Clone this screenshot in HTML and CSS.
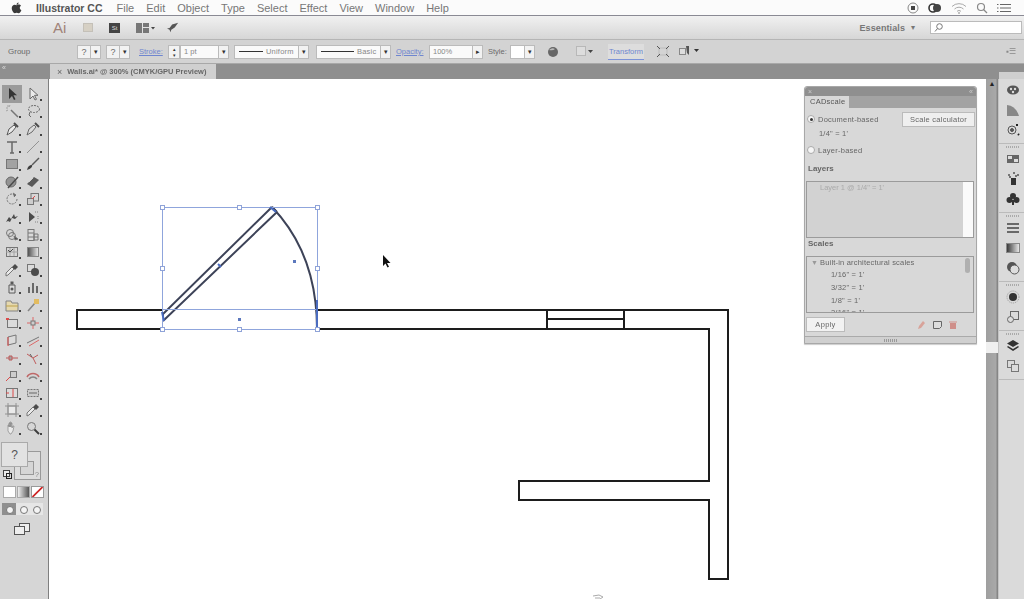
FILE: index.html
```html
<!DOCTYPE html>
<html lang="en">
<head>
<meta charset="utf-8">
<title>Illustrator CC</title>
<link rel="stylesheet" href="styles.css">
</head>
<body>
<header class="menubar">
  <svg class="apple" width="12" height="13" viewBox="0 0 12 13"><path d="M8.300 0.500c.1 1.200-1 2.500-2.300 2.400-.1-1.200 1.100-2.400 2.300-2.400zM6 3.400c.6 0 1.400-.6 2.500-.6 1 0 1.900.5 2.400 1.300-2 1.200-1.700 3.900.4 4.800-.5 1.400-1.700 3.400-3 3.400-.8 0-1.200-.5-2.100-.5s-1.400.5-2.100.5C2.800 12.300.8 9.400.8 6.900c0-2.500 1.600-3.900 3.200-3.900.9 0 1.500.4 2 .4z" fill="#3a3a3a"/></svg>
  <span class="menu-app">Illustrator CC</span>
  <nav class="menu-items"><span>File</span><span>Edit</span><span>Object</span><span>Type</span><span>Select</span><span>Effect</span><span>View</span><span>Window</span><span>Help</span></nav>
  <div class="status">
    <svg width="12" height="12" viewBox="0 0 12 12"><circle cx="6" cy="6" r="5" fill="none" stroke="#888"/><rect x="4" y="4" width="4" height="4" fill="#444"/></svg>
    <svg width="14" height="12" viewBox="0 0 14 12"><circle cx="5" cy="6" r="4" fill="none" stroke="#333" stroke-width="1.600"/><circle cx="9" cy="6" r="4" fill="#444"/></svg>
    <svg width="16" height="12" viewBox="0 0 16 12" fill="none" stroke="#aaa"><path d="M1 4.500a10 10 0 0 1 14 0M3.500 7a6.500 6.500 0 0 1 9 0M6 9.300a3 3 0 0 1 4 0"/><circle cx="8" cy="11" r=".8" fill="#777" stroke="none"/></svg>
    <svg width="12" height="12" viewBox="0 0 12 12" fill="none" stroke="#888" stroke-width="1.200"><circle cx="5" cy="5" r="3.500"/><path d="M7.500 7.500L11 11"/></svg>
    <svg width="14" height="10" viewBox="0 0 14 10" stroke="#666"><path d="M3 1.500h11M3 5h11M3 8.500h11M0 1.500h1.500M0 5h1.500M0 8.500h1.500"/></svg>
  </div>
</header>

<section class="appbar">
  <span class="ai-logo">Ai</span>
  <span class="app-bridge"></span>
  <span class="app-stock">St</span>
  <svg class="app-arrange" width="20" height="10" viewBox="0 0 20 10"><path d="M0 0h6v10H0zM7 0h6v4H7zM7 5h6v5H7z" fill="#777"/><path d="M15 4h4l-2 2.500z" fill="#444"/></svg>
  <svg class="app-rocket" width="12" height="12" viewBox="0 0 14 12"><path d="M13 0L6 2 3 6 0 6.500 3 8l1 3 1-3 4-2.500z" fill="#555"/></svg>
  <div class="app-right">
    <span class="essentials">Essentials</span>
    <span class="small-arrow">▾</span>
    <div class="search-box"><svg width="9" height="9" viewBox="0 0 9 9" fill="none" stroke="#777"><circle cx="5.500" cy="3.500" r="2.800"/><path d="M3.500 5.500L1 8.500"/></svg></div>
  </div>
</section>

<section class="controlbar">
  <span class="ctl-label ctl-group">Group</span>
  <span class="q-box">?</span><span class="drop-btn">▾</span>
  <span class="q-box q-second">?</span><span class="drop-btn">▾</span>
  <span class="link ctl-stroke">Stroke:</span>
  <span class="stepper"><i>▴</i><i>▾</i></span>
  <span class="field field-pt">1 pt</span><span class="drop-btn">▾</span>
  <span class="field field-line"><b></b><em>Uniform</em></span><span class="drop-btn">▾</span>
  <span class="field field-line field-basic"><b></b><em>Basic</em></span><span class="drop-btn">▾</span>
  <span class="link ctl-opacity">Opacity:</span>
  <span class="field field-op">100%</span><span class="drop-btn">▸</span>
  <span class="ctl-label ctl-style">Style:</span>
  <span class="field field-style"></span><span class="drop-btn">▾</span>
  <svg class="ctl-globe" width="12" height="12" viewBox="0 0 12 12"><circle cx="6" cy="6" r="5" fill="#666"/><path d="M2 4q3-3 6-1q-2 2-6 1z" fill="#bbb"/></svg>
  <svg class="ctl-grid" width="17" height="11" viewBox="0 0 17 11"><rect x=".5" y=".5" width="9" height="9" fill="#ddd" stroke="#999" stroke-dasharray="1 1"/><path d="M12 4h5l-2.500 3z" fill="#444"/></svg>
  <span class="link ctl-transform">Transform</span>
  <svg class="ctl-xform" width="12" height="11" viewBox="0 0 12 11" fill="none" stroke="#555"><path d="M2 2h8v7H2z" stroke="#bbb"/><path d="M0 0l3 3M12 0L9 3M0 11l3-3M12 11L9 8"/></svg>
  <svg class="ctl-align" width="22" height="11" viewBox="0 0 22 11"><rect x=".5" y="2.500" width="6" height="6" fill="#ddd" stroke="#888"/><path d="M7 0h3v9L8 7z" fill="#555"/><path d="M15 3h5l-2.500 3z" fill="#333"/></svg>
  <span class="ctl-menu">▪☰</span>
</section>

<section class="tabstrip">
  <div class="toolhead"><span class="chev">«</span></div>
  <div class="doctab"><span class="tab-x">×</span><span>Walls.ai* @ 300% (CMYK/GPU Preview)</span></div>
  <div class="dockhead"></div>
</section>

<main class="workspace">
  <aside class="tools">
    <div class="tool-grid">
      <span class="tool on"><svg viewBox="0 0 14 14"><path d="M4 1v11l3-3 2 4 1.500-.7-2-4h3.500z" fill="#222"/></svg></span>
      <span class="tool"><svg viewBox="0 0 14 14"><path d="M4 1v11l3-3 2 4 1.500-.7-2-4h3.500z" fill="#eee" stroke="#555"/></svg></span>
      <span class="tool"><svg viewBox="0 0 14 14" fill="none" stroke="#666"><path d="M13 13L6 6" stroke-width="1.500"/><path d="M3 1v2M1 4h2M5 1L4 3M1 7l2-1" stroke="#999"/></svg></span>
      <span class="tool"><svg viewBox="0 0 14 14" fill="none" stroke="#555"><ellipse cx="8" cy="5" rx="5.500" ry="3.500" stroke-dasharray="2 1"/><path d="M4 8l-1 3 2 2"/></svg></span>
      <span class="tool tool-gap"><svg viewBox="0 0 14 14"><path d="M2 13l2-6 5-4 2 2-4 5z" fill="#eee" stroke="#444"/><path d="M9 1l4 4" stroke="#333" stroke-width="2"/></svg></span>
      <span class="tool tool-gap"><svg viewBox="0 0 14 14"><path d="M1 13l2-6 5-4 2 2-4 5z" fill="#ddd" stroke="#555"/><path d="M9 1l4 4" stroke="#333" stroke-width="2"/></svg></span>
      <span class="tool"><svg viewBox="0 0 14 14" fill="none" stroke="#555" stroke-width="1.500"><path d="M2 2h10M7 2v11M5 13h4"/></svg></span>
      <span class="tool"><svg viewBox="0 0 14 14" stroke="#888"><path d="M1 13L13 1"/></svg></span>
      <span class="tool"><svg viewBox="0 0 14 14"><rect x="1.500" y="2.500" width="11" height="9" fill="#999" stroke="#666"/></svg></span>
      <span class="tool"><svg viewBox="0 0 14 14"><path d="M13 1L6 8" stroke="#444" stroke-width="1.500"/><path d="M1 13q1-5 5-5q1 3-5 5z" fill="#222"/></svg></span>
      <span class="tool"><svg viewBox="0 0 14 14"><circle cx="6" cy="7" r="5" fill="#888" stroke="#555"/><path d="M3 13L13 2" stroke="#333" stroke-width="1.500"/></svg></span>
      <span class="tool"><svg viewBox="0 0 14 14"><path d="M1 9l7-7 5 3-7 7z" fill="#444"/><path d="M3 7l4-4" stroke="#ccc"/></svg></span>
      <span class="tool tool-gap"><svg viewBox="0 0 14 14" fill="none" stroke="#666"><path d="M12 7a5 5 0 1 1-2-4" stroke-dasharray="2 1"/><path d="M8 1l3 2-2 2" fill="#555"/></svg></span>
      <span class="tool tool-gap"><svg viewBox="0 0 14 14" fill="none" stroke="#666"><rect x="5" y="1.500" width="7.500" height="7.500"/><rect x="1.500" y="6.500" width="6" height="6" fill="#ccc"/><path d="M6 7l3-3" stroke="#d33"/></svg></span>
      <span class="tool"><svg viewBox="0 0 14 14"><path d="M1 12l3-5 2 2 3-5 1 3 3-1-3 3-3-1-2 4-2-1z" fill="#333"/></svg></span>
      <span class="tool"><svg viewBox="0 0 14 14"><path d="M3 2l6 5-6 5z" fill="#333"/><path d="M9 2h4M12 6v3M9 12h4" stroke="#777" stroke-dasharray="1 1"/></svg></span>
      <span class="tool"><svg viewBox="0 0 14 14" fill="none" stroke="#666"><circle cx="5" cy="5" r="3.500"/><circle cx="7" cy="8" r="3.500"/><path d="M9 8l4 3-3 1z" fill="#333"/></svg></span>
      <span class="tool"><svg viewBox="0 0 14 14" fill="none" stroke="#666"><rect x="2" y="1.500" width="6" height="11" fill="#ddd"/><path d="M8 6h4v6H8zM2 5h6M2 9h10"/></svg></span>
      <span class="tool tool-gap"><svg viewBox="0 0 14 14" fill="none" stroke="#666"><rect x="1.500" y="2.500" width="11" height="9"/><path d="M1 7h12M5 3v8M9 3v8" stroke="#999"/><path d="M3 5l2 2 3-3" stroke="#333"/></svg></span>
      <span class="tool tool-gap"><svg viewBox="0 0 14 14"><defs><linearGradient id="gr"><stop offset="0" stop-color="#333"/><stop offset="1" stop-color="#eee"/></linearGradient></defs><rect x="1.500" y="2.500" width="11" height="9" fill="url(#gr)" stroke="#777"/></svg></span>
      <span class="tool"><svg viewBox="0 0 14 14"><path d="M1 13l2-1 6-6-2-2-6 6z" fill="#eee" stroke="#666"/><path d="M7 4l3-3 3 3-3 3z" fill="#333"/></svg></span>
      <span class="tool"><svg viewBox="0 0 14 14"><rect x="1.500" y="1.500" width="7" height="7" fill="#ddd" stroke="#666"/><circle cx="9" cy="9" r="4" fill="#333"/></svg></span>
      <span class="tool"><svg viewBox="0 0 14 14"><path d="M4 5h6v8H4z" fill="#ddd" stroke="#444"/><rect x="5.500" y="1.500" width="3" height="3" fill="#444"/><circle cx="7" cy="9" r="1.500" fill="#444"/></svg></span>
      <span class="tool"><svg viewBox="0 0 14 14" fill="#555"><path d="M2 7h2v6H2zM6 3h2v10H6zM10 6h2v7h-2z"/></svg></span>
      <span class="tool tool-gap"><svg viewBox="0 0 14 14"><path d="M1 3h5l1 2h6v8H1z" fill="#e8d9a8" stroke="#777"/><path d="M1 8h12" stroke="#b93"/></svg></span>
      <span class="tool tool-gap"><svg viewBox="0 0 14 14"><path d="M2 13l7-8" stroke="#777" stroke-width="1.500"/><rect x="8" y="1" width="5" height="5" fill="#e6b84c"/></svg></span>
      <span class="tool tool-gap"><svg viewBox="0 0 14 14"><rect x="2.500" y="3.500" width="10" height="8" fill="#ddd" stroke="#666"/><path d="M1 3h3" stroke="#d33" stroke-width="2"/></svg></span>
      <span class="tool tool-gap"><svg viewBox="0 0 14 14" stroke="#d55" fill="none"><path d="M7 1v12M1 7h12"/><rect x="5" y="5" width="4" height="4" fill="#ccc" stroke="#666"/></svg></span>
      <span class="tool"><svg viewBox="0 0 14 14"><path d="M3 4l8-2v8l-8 2z" fill="#ddd" stroke="#666"/><path d="M3 4v9" stroke="#d33"/></svg></span>
      <span class="tool"><svg viewBox="0 0 14 14" fill="none" stroke="#666"><path d="M1 10l12-6"/><path d="M3 13l10-6" stroke="#d55"/></svg></span>
      <span class="tool"><svg viewBox="0 0 14 14" fill="none" stroke="#b44"><path d="M1 7h12"/><path d="M4 5h3v4H4z" fill="#999"/></svg></span>
      <span class="tool"><svg viewBox="0 0 14 14" fill="none" stroke="#b44"><path d="M1 3l6 4 3 6M7 7l5-3"/><path d="M4 3l2 3" stroke="#444"/></svg></span>
      <span class="tool"><svg viewBox="0 0 14 14" fill="none" stroke="#666"><rect x="5.500" y="3.500" width="6" height="6" fill="#ccc"/><path d="M1 13l4-4" stroke="#d33"/></svg></span>
      <span class="tool"><svg viewBox="0 0 14 14" fill="none" stroke="#777" stroke-width="1.500"><path d="M1 9a7 7 0 0 1 12 0" stroke="#b55"/><path d="M3 11a5 5 0 0 1 8 0"/></svg></span>
      <span class="tool"><svg viewBox="0 0 14 14" fill="none" stroke="#666"><rect x="1.500" y="2.500" width="11" height="9" fill="#ddd"/><path d="M8 3v8M1 7h3" stroke="#d33"/></svg></span>
      <span class="tool"><svg viewBox="0 0 14 14" fill="none" stroke="#666"><rect x="1.500" y="3.500" width="11" height="7" fill="#ccc" stroke-dasharray="2 1"/><path d="M3 7h8" stroke="#555"/></svg></span>
      <span class="tool tool-gap"><svg viewBox="0 0 14 14" fill="none" stroke="#888"><rect x="3" y="3" width="8" height="8" fill="#eee"/><path d="M3 0v14M11 0v14M0 3h14M0 11h14"/></svg></span>
      <span class="tool tool-gap"><svg viewBox="0 0 14 14"><path d="M1 13l2-1 6-6-2-2-6 6z" fill="#eee" stroke="#666"/><path d="M7 4l3-3 3 3-3 3z" fill="#333"/></svg></span>
      <span class="tool"><svg viewBox="0 0 14 14"><path d="M3 7V4h1v2V2h1v4V1h1v5V2h1v5l1-2h1l-1 5-2 3H5L3 10z" fill="#eee" stroke="#666" stroke-width=".6"/></svg></span>
      <span class="tool"><svg viewBox="0 0 14 14" fill="none" stroke="#666"><circle cx="5.500" cy="5.500" r="4"/><path d="M8.500 8.500L13 13" stroke="#222" stroke-width="2"/></svg></span>
    </div>
    <div class="swatches">
      <span class="fill-front">?</span>
      <span class="fill-back"><i></i><u>?</u></span>
      <span class="mini-swap"></span>
      <span class="mini-default"></span>
    </div>
    <div class="color-modes"><span class="cm cm-solid"></span><span class="cm cm-grad"></span><span class="cm cm-none"><svg viewBox="0 0 12 12"><path d="M0 12L12 0" stroke="#c22" stroke-width="2"/></svg></span></div>
    <div class="draw-modes"><span class="dm on"></span><span class="dm"></span><span class="dm"></span></div>
    <div class="screen-mode"><svg width="16" height="13" viewBox="0 0 16 13" fill="#eee" stroke="#555"><rect x="5.500" y=".5" width="10" height="8"/><rect x=".5" y="3.500" width="10" height="8"/></svg></div>
  </aside>

  <div class="canvas">
    <svg class="drawing" width="1024" height="520" viewBox="0 79 1024 520">
      <g fill="none" stroke="#1d1d1d" stroke-width="2">
        <path d="M162 310H77v19h85"/>
        <path d="M317 310H728V579H709V500H519V481H709V329H317"/>
        <path d="M547 310v19M624 310v19M547 319h77"/>
      </g>
      <g fill="none" stroke="#3d4358" stroke-width="2">
        <path d="M163 314L272 207M163 321L277 212M163 314v7M272 207l5 5"/>
        <path d="M272 207Q317 254 317 329"/>
      </g>
      <g fill="none" stroke="#8fa5dc">
        <path d="M162.500 207.500H317.500V329.500H162.500zM162.500 309.500H317.500"/>
        <path d="M162 312l2 9M218 264l3 3M270 207l6 5M317 300v28" stroke="#4a6cc0" stroke-width="2"/>
      </g>
      <g fill="#fff" stroke="#8fa3d8">
        <rect x="160.500" y="205.500" width="4" height="4"/><rect x="237.500" y="205.500" width="4" height="4"/><rect x="315.500" y="205.500" width="4" height="4"/>
        <rect x="160.500" y="266.500" width="4" height="4"/><rect x="315.500" y="266.500" width="4" height="4"/>
        <rect x="160.500" y="327.500" width="4" height="4"/><rect x="237.500" y="327.500" width="4" height="4"/><rect x="315.500" y="327.500" width="4" height="4"/>
      </g>
      <g fill="#5c78bd"><rect x="293" y="260" width="3" height="3"/><rect x="238" y="318" width="3" height="3"/></g>
      <path d="M383 255v11l2.500-2.500 2 4 1.500-.7-2-3.800h3.500z" fill="#111"/>
      <path d="M593 596l6-1 4 2-3 2M595 598h5" fill="none" stroke="#aaa"/>
    </svg>

    <section class="panel">
      <div class="panel-top"><span>×</span><span>«</span></div>
      <div class="panel-tabs"><span class="panel-tab">CADscale</span></div>
      <div class="panel-body">
        <div class="mode-row">
          <span class="radio checked"></span><span class="mode-label">Document-based</span>
          <span class="calc-btn">Scale calculator</span>
        </div>
        <div class="scale-line">1/4" = 1'</div>
        <div class="mode-row layer-mode"><span class="radio"></span><span class="mode-label">Layer-based</span></div>
        <h3 class="section-head">Layers</h3>
        <div class="list layers-list"><span class="layer-item">Layer 1 @ 1/4" = 1'</span><span class="layer-track"></span></div>
        <h3 class="section-head scales-head">Scales</h3>
        <div class="list scales-list">
          <div class="scale-group"><i>▼</i>Built-in architectural scales</div>
          <div class="scale-item">1/16" = 1'</div>
          <div class="scale-item">3/32" = 1'</div>
          <div class="scale-item">1/8" = 1'</div>
          <div class="scale-item">3/16" = 1'</div>
          <span class="scale-thumb"></span>
        </div>
        <div class="panel-actions">
          <span class="apply-btn">Apply</span>
          <div class="action-icons">
            <svg width="9" height="10" viewBox="0 0 9 10"><path d="M1 9l1-3 4-5 2 2-4 5z" fill="#d8a39a"/></svg>
            <svg width="9" height="9" viewBox="0 0 9 9"><path d="M.5 1.500h8v5l-2 2h-6z" fill="#ddd" stroke="#666"/></svg>
            <svg width="8" height="9" viewBox="0 0 8 9"><path d="M0 1.500h8v1H0zM1 3h6v6H1z" fill="#cf8f8a"/></svg>
          </div>
        </div>
      </div>
      <div class="panel-foot"><span class="foot-grip"></span></div>
    </section>
  </div>

  <div class="vscroll">
    <span class="up-arrow">▲</span>
    <span class="v-thumb"></span>
  </div>

  <aside class="dock">
    <div class="dock-group first">
      <svg viewBox="0 0 14 14"><ellipse cx="7" cy="7" rx="6" ry="4.500" fill="#555"/><circle cx="5" cy="6" r="1.200" fill="#ddd"/><circle cx="9" cy="6" r="1.200" fill="#ddd"/><circle cx="7" cy="9" r="1.200" fill="#ddd"/></svg>
      <svg viewBox="0 0 14 14"><path d="M1 13V2q9 1 12 11z" fill="#888"/></svg>
      <svg viewBox="0 0 14 14" fill="none" stroke="#555"><circle cx="6" cy="7" r="4"/><circle cx="6" cy="7" r="1.500" fill="#555"/><path d="M10 2l2 0M12 11l1 1" stroke="#222" stroke-width="2"/></svg>
    </div>
    <div class="dock-group">
      <svg viewBox="0 0 14 14"><rect x="1" y="3" width="12" height="8" fill="#666"/><path d="M2 4h4v3H2zM8 7h4v3H8z" fill="#ddd"/></svg>
      <svg viewBox="0 0 14 14"><rect x="5" y="6" width="5" height="7" fill="#333"/><path d="M2 3h2M7 1h2M11 3h2M3 5h2M9 4h2" stroke="#555" stroke-width="1.500"/></svg>
      <svg viewBox="0 0 14 14" fill="#333"><circle cx="7" cy="4" r="3"/><circle cx="3.500" cy="8" r="3"/><circle cx="10.500" cy="8" r="3"/><path d="M6 8h2v5H6z"/></svg>
    </div>
    <div class="dock-group">
      <svg viewBox="0 0 14 14" stroke="#444" stroke-width="1.500"><path d="M1 3h12M1 7h12M1 11h12"/></svg>
      <svg viewBox="0 0 14 14"><rect x=".5" y="2.500" width="13" height="9" fill="url(#gr)" stroke="#888"/></svg>
      <svg viewBox="0 0 14 14"><circle cx="6" cy="6" r="5" fill="#555"/><circle cx="8.500" cy="8.500" r="4.500" fill="#ddd" stroke="#555"/></svg>
    </div>
    <div class="dock-group">
      <svg viewBox="0 0 14 14"><circle cx="7" cy="7" r="6" fill="none" stroke="#999" stroke-dasharray="1 1"/><circle cx="7" cy="7" r="4" fill="#333"/></svg>
      <svg viewBox="0 0 14 14" fill="none" stroke="#666"><rect x="4.500" y="1.500" width="8" height="8"/><circle cx="4.500" cy="9.500" r="3" fill="#ddd"/></svg>
    </div>
    <div class="dock-group">
      <svg viewBox="0 0 14 14" fill="#333"><path d="M7 1l6 3.500-6 3.500-6-3.500z"/><path d="M2 7l5 3 5-3 1 1-6 4-6-4z"/></svg>
      <svg viewBox="0 0 14 14" fill="none" stroke="#777"><rect x="1.500" y="1.500" width="7" height="7"/><rect x="5.500" y="5.500" width="7" height="7" fill="#ddd"/></svg>
    </div>
  </aside>
</main>
</body>
</html>
```
FILE: styles.css
```css
* { box-sizing: border-box; }
html, body { margin: 0; height: 599px; overflow: hidden; }
body { font-family: "Liberation Sans", Arial, sans-serif; color: #555; background: #fff; display: flex; flex-direction: column; filter: blur(.35px); }

.menubar { height: 16px; flex: none; display: flex; align-items: center; background: #fbfbfb; border-bottom: 1px solid #8a8a94; padding-left: 11px; font-size: 11px; color: #777; }
.apple { margin-right: 14px; width: 11px; height: 12px; }
.menu-app { font-weight: 700; color: #555; margin-right: 14px; font-size: 10.500px; }
.menu-items { display: flex; gap: 12px; }
.status { margin-left: auto; display: flex; align-items: center; gap: 9px; padding-right: 13px; }

.appbar { height: 24px; flex: none; display: flex; align-items: center; background: linear-gradient(#f1f1f1, #d6d6d6); border-bottom: 1px solid #b5b5b5; padding-left: 53px; }
.ai-logo { font-size: 15px; color: #a08378; width: 14px; margin-right: 16px; line-height: 1; }
.app-bridge { width: 10px; height: 9px; background: #d6d0c4; border: 1px solid #c4c0b8; margin-right: 16px; }
.app-stock { width: 11px; height: 10px; background: #444; color: #ddd; font-size: 6px; line-height: 10px; text-align: center; margin-right: 16px; }
.app-arrange { margin-right: 11px; }
.app-right { margin-left: auto; display: flex; align-items: center; padding-right: 2px; }
.essentials { font-size: 9px; font-weight: 700; color: #777; letter-spacing: .1px; }
.small-arrow { font-size: 8px; color: #777; margin: 0 15px 0 6px; }
.search-box { width: 92px; height: 13px; background: #fff; border: 1px solid #bbb; display: flex; align-items: center; padding-left: 3px; }

.controlbar { height: 24px; flex: none; display: flex; align-items: center; background: #d3d3d3; border-bottom: 1px solid #a8a8a8; font-size: 7.500px; padding-left: 8px; color: #6a6a6a; white-space: nowrap; }
.ctl-group { width: 69px; font-size: 8px; }
.q-box { width: 14px; height: 14px; background: #f2f2f2; border: 1px solid #bbb; text-align: center; line-height: 12px; font-size: 9px; }
.q-second { margin-left: 5px; }
.drop-btn { width: 10px; height: 14px; background: #f2f2f2; border: 1px solid #bbb; border-left: none; color: #333; font-size: 7px; text-align: center; line-height: 12px; }
.link { color: #6f86cf; text-decoration: underline; font-size: 7.500px; }
.ctl-stroke { margin-left: 9px; width: 29px; }
.stepper { width: 12px; height: 14px; background: #f2f2f2; border: 1px solid #bbb; display: flex; flex-direction: column; color: #333; font-size: 5px; line-height: 6px; align-items: center; }
.stepper i { font-style: normal; }
.field { height: 14px; background: #fafafa; border: 1px solid #bbb; line-height: 12px; padding-left: 3px; font-size: 7.500px; color: #888; display: inline-flex; align-items: center; }
.field-pt { width: 39px; }
.field-line { width: 65px; margin-left: 5px; padding-left: 4px; }
.field-line b { flex: none; width: 24px; height: 1px; background: #333; margin-right: 3px; }
.field-line em { font-style: normal; letter-spacing: .2px; }
.field-basic { width: 65px; margin-left: 7px; }
.field-basic b { width: 33px; }
.ctl-opacity { margin-left: 5px; width: 33px; }
.field-op { width: 44px; }
.ctl-style { margin-left: 5px; width: 22px; }
.field-style { width: 15px; background: #fff; }
.ctl-globe { margin-left: 12px; }
.ctl-grid { margin-left: 17px; }
.ctl-transform { margin-left: 15px; width: 36px; text-decoration: none; background: #ddd; padding: 3px 0; text-align: center; border-bottom: 1px solid #7d93d8; }
.ctl-xform { margin-left: 13px; }
.ctl-align { margin-left: 10px; }
.ctl-menu { margin-left: auto; margin-right: 8px; font-size: 8px; color: #888; }

.tabstrip { height: 15px; flex: none; display: flex; background: #8f8f8f; }
.toolhead { width: 50px; background: #8f8f8f; color: #ddd; font-size: 7px; padding-left: 2px; line-height: 8px; }
.doctab { width: 166px; background: #d0d0d0; display: flex; align-items: center; gap: 5px; padding-left: 7px; font-size: 7.500px; font-weight: 700; color: #666; white-space: nowrap; }
.tab-x { font-size: 9px; font-weight: 400; }
.dockhead { margin-left: auto; width: 25px; height: 15px; background: linear-gradient(#8f8f8f 50%, #cfcfcf 50%); }

.workspace { flex: 1; display: flex; min-height: 0; }

.tools { width: 49px; flex: none; background: #d6d6d6; border-right: 1px solid #7f7f7f; display: flex; flex-direction: column; padding: 6px 0 0 2px; }
.tool-grid { display: grid; grid-template-columns: 20px 20px; column-gap: 1px; grid-auto-rows: 17.600px; }
.tool { display: flex; align-items: center; justify-content: center; position: relative; }
.tool svg { width: 14px; height: 14px; opacity: .85; }
.tool.on { background: #9b9b9b; }
.tool:not(.on)::after { content: ""; position: absolute; right: 1px; bottom: 2px; width: 2px; height: 2px; background: #444; }

.swatches { position: relative; height: 43px; margin-top: 5px; }
.fill-front { position: absolute; left: -1px; top: 0; width: 27px; height: 25px; background: #e2e2e2; border: 1px solid #aaa; text-align: center; font-size: 12px; line-height: 24px; color: #555; z-index: 1; }
.fill-back { position: absolute; left: 12px; top: 9px; width: 27px; height: 29px; border: 1px solid #999; background: #ddd; }
.fill-back i { position: absolute; left: 5px; top: 9px; width: 14px; height: 14px; border: 1px solid #999; background: #d6d6d6; }
.fill-back u { position: absolute; right: 1px; bottom: 0; font-size: 7px; line-height: 8px; text-decoration: none; color: #888; }
.mini-swap { position: absolute; left: 1px; top: 28px; width: 7px; height: 7px; border: 1px solid #444; background: #eee; z-index: 1; }
.mini-default { position: absolute; left: 4px; top: 31px; width: 6px; height: 6px; border: 1px solid #222; z-index: 2; }
.color-modes { display: flex; gap: 1px; margin-top: 1px; height: 13px; padding-left: 1px; }
.cm { width: 13px; height: 12px; border: 1px solid #aaa; }
.cm-solid { background: #fff; }
.cm-grad { background: linear-gradient(90deg, #eee, #555); }
.cm-none { background: #fff; border-color: #999; }
.cm-none svg { display: block; width: 11px; height: 10px; }
.draw-modes { display: flex; margin-top: 4px; height: 12px; background: #e6e6e6; width: 41px; }
.dm { flex: 1; position: relative; }
.dm.on { background: #8f8f8f; }
.dm::after { content: ""; position: absolute; left: 4px; top: 3px; width: 6px; height: 6px; border-radius: 50%; background: #f4f4f4; border: 1px solid #777; }
.screen-mode { margin-top: 7px; padding-left: 12px; }

.canvas { flex: 1; background: #fff; position: relative; overflow: hidden; min-width: 0; }
.drawing { position: absolute; left: -49px; top: 0; }

.panel { position: absolute; left: 755px; top: 7px; width: 173px; height: 258px; background: #d8d8d8; border: 1px solid #a8a8a8; border-radius: 3px 3px 0 0; box-shadow: 0 1px 1px rgba(0,0,0,.2); display: flex; flex-direction: column; }
.panel-top { height: 9px; flex: none; background: #8f8f8f; color: #ccc; font-size: 7px; line-height: 9px; display: flex; justify-content: space-between; padding: 0 3px; border-radius: 3px 3px 0 0; }
.panel-tabs { height: 12px; flex: none; background: #a3a3a3; }
.panel-tab { display: block; width: 44px; height: 12px; background: #d8d8d8; font-size: 7.500px; color: #555; padding: 1px 0 0 5px; letter-spacing: .25px; white-space: nowrap; }
.panel-body { flex: 1; padding: 0 1px; display: flex; flex-direction: column; min-height: 0; }
.mode-row { display: flex; align-items: center; height: 16px; margin-top: 3px; font-size: 7.500px; color: #666; padding-left: 1px; letter-spacing: .25px; }
.radio { width: 8px; height: 8px; border-radius: 50%; background: #f6f6f6; border: 1px solid #aaa; margin-right: 3px; position: relative; }
.radio.checked::after { content: ""; position: absolute; left: 1.500px; top: 1.500px; width: 3px; height: 3px; border-radius: 50%; background: #333; }
.calc-btn { margin-left: auto; width: 73px; height: 15px; background: #efefef; border: 1px solid #bbb; text-align: center; line-height: 13px; color: #666; font-size: 7.500px; }
.scale-line { font-size: 7.500px; color: #666; padding-left: 13px; height: 15px; line-height: 14px; letter-spacing: .2px; }
.layer-mode { margin-top: 0; }
.section-head { margin: 5px 0 4px 2px; font-size: 8px; font-weight: 700; color: #666; height: 14px; line-height: 12px; }
.scales-head { margin-top: 0; }
.list { position: relative; flex: none; border: 1px solid #9b9b9b; overflow: hidden; margin-right: 1px; height: 57px; }
.layers-list { background: #d2d2d2; }
.layer-item { display: block; font-size: 7.500px; color: #aaa; padding: 1px 0 0 13px; }
.layer-track { position: absolute; right: 0; top: 0; bottom: 0; width: 10px; background: #fafafa; }
.scales-list { font-size: 7.500px; color: #666; background: #d8d8d8; }
.scale-group { padding: 1px 0 0 4px; height: 13px; letter-spacing: .18px; }
.scale-group i { font-style: normal; font-size: 7px; color: #999; margin-right: 2px; }
.scale-item { padding-left: 24px; height: 12.800px; letter-spacing: .2px; }
.scale-thumb { position: absolute; right: 3px; top: 1px; width: 5px; height: 15px; background: #b0b0b0; border-radius: 3px; }
.panel-actions { display: flex; align-items: center; justify-content: space-between; flex: 1; }
.apply-btn { width: 39px; height: 15px; background: #f2f2f2; border: 1px solid #bbb; text-align: center; font-size: 7.500px; line-height: 13px; color: #666; letter-spacing: .3px; }
.action-icons { display: flex; gap: 7px; margin-right: 18px; }
.panel-foot { height: 7px; flex: none; background: #d0d0d0; border-top: 1px solid #aaa; display: flex; justify-content: center; align-items: center; }
.foot-grip { width: 14px; height: 3px; background: repeating-linear-gradient(90deg, #999 0 1px, transparent 1px 2px); }

.vscroll { width: 12px; flex: none; background: linear-gradient(90deg, #9f9f9f, #a8a8a8 80%, #7c7c7c); position: relative; }
.up-arrow { display: block; color: #222; font-size: 7px; line-height: 10px; text-align: center; }
.v-thumb { position: absolute; left: 0; top: 263px; width: 12px; height: 11px; background: #f0f0f0; }

.dock { width: 26px; flex: none; background: #dadada; border-left: 1px solid #c4c4c4; display: flex; flex-direction: column; }
.dock-group { position: relative; border-bottom: 1px solid #bbb; padding: 8px 0 6px 3px; display: flex; flex-direction: column; align-items: center; gap: 6px; }
.dock-group::before { content: ""; position: absolute; left: 7px; top: 2px; width: 14px; height: 2px; background: repeating-linear-gradient(90deg, #aaa 0 1px, transparent 1px 2px); }
.dock-group.first { padding-top: 4px; }
.dock-group.first::before { display: none; }
.dock-group svg { width: 14px; height: 14px; flex: none; }
```
